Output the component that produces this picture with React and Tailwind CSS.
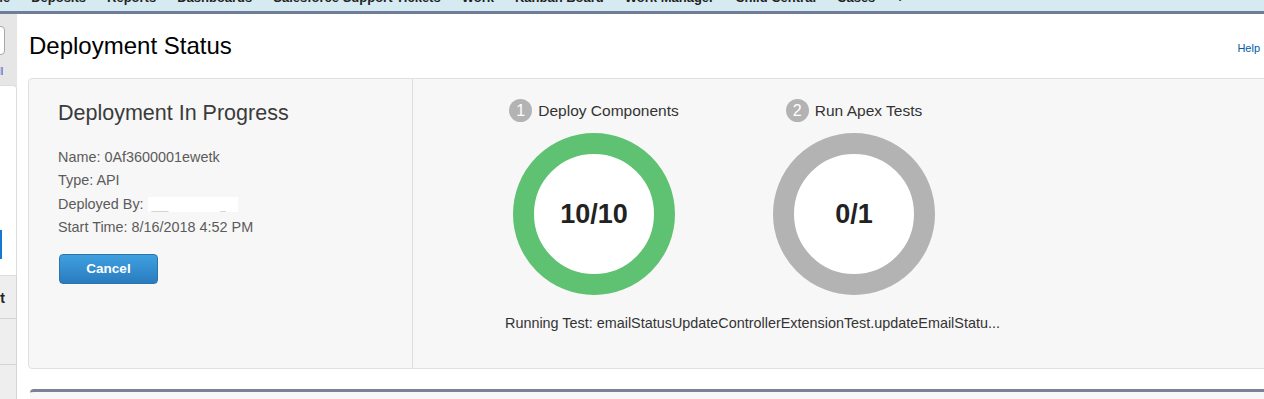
const navItems = ['Home', 'Deposits', 'Reports', 'Dashboards', 'Salesforce Support Tickets', 'Work', 'Kanban Board', 'Work Manager', 'Child Central', 'Cases', '+'];

function Step({ num, label, done, total, color }) {
  return (
    <div className="flex w-[162px] flex-col items-center">
      <div className="flex h-[23px] items-center gap-[6px] whitespace-nowrap">
        <span className="flex h-[23px] w-[23px] items-center justify-center rounded-full bg-[#b3b3b3] text-[16px] text-white">
          {num}
        </span>
        <span className="text-[15.5px] text-[#333]">{label}</span>
      </div>
      <div className={`mt-[11px] flex h-[162px] w-[162px] items-center justify-center rounded-full border-[21px] bg-white ${color}`}>
        <span className="text-[27px] font-bold text-[#222]">
          {done}/{total}
        </span>
      </div>
    </div>
  );
}

export default function App() {
  return (
    <div className="flex h-[399px] w-[1264px] flex-col overflow-hidden bg-white" style={{ fontFamily: '"Liberation Sans", Arial, sans-serif' }}>
      {/* Top tab bar, mostly scrolled off */}
      <div className="h-[14px] shrink-0 overflow-hidden border-b-[3px] border-[#6f7e96] bg-[#d6eaf2]">
        <div className="-ml-[26px] -mt-[9px] flex gap-[21px] whitespace-nowrap text-[13px] font-bold leading-[13px] text-[#222]">
          {navItems.map((item) => (
            <span key={item}>{item}</span>
          ))}
        </div>
      </div>

      <div className="flex min-h-0 flex-1">
        {/* Sidebar */}
        <div className="flex w-[17px] shrink-0 flex-col overflow-hidden bg-[#e6e6e6] pt-[12px]">
          <div className="-ml-[25px] h-[29px] w-[30px] shrink-0 rounded-[4px] border border-[#a9a9a9] bg-white" />
          <div className="-ml-[9px] mt-[10px] text-[11px] leading-[13px] text-[#4b3fc0]">All</div>
          <div className="mt-[7px] h-[191px] shrink-0 rounded-tr-[4px] border border-l-0 border-[#dcdcdc] bg-white">
            <div className="mt-[144px] h-[29px] w-[2px] bg-[#1976d2]" />
          </div>
          <div className="flex h-[43px] shrink-0 items-center justify-end overflow-hidden border-b border-r border-[#d4d4d4] bg-[#eeeeee] pr-[11px] pt-[2px]">
            <span className="whitespace-nowrap text-[14px] font-bold text-[#222]">Report</span>
          </div>
          <div className="h-[46px] shrink-0 border-b border-r border-[#d4d4d4] bg-[#eeeeee]" />
          <div className="flex-1 border-r border-[#d4d4d4] bg-[#eeeeee]" />
        </div>

        {/* Main */}
        <div className="flex min-w-0 flex-1 flex-col overflow-hidden pl-[12px]">
          <div className="flex items-start justify-between pr-[4px] pt-[18px]">
            <h1 className="text-[24px] leading-[28px] text-black">Deployment Status</h1>
            <a className="mt-[8px] text-[11px] text-[#015ba7]">Help</a>
          </div>

          <div className="-ml-[1px] -mr-[20px] mt-[18px] flex h-[291px] shrink-0 rounded-[4px] border border-[#e0e0e0] bg-[#f7f7f7]">
            <div className="w-[384px] shrink-0 border-r border-[#dddddd] pl-[29px] pt-[21px]">
              <h2 className="text-[21.5px] leading-[26px] text-[#3b3b3b]">Deployment In Progress</h2>
              <div className="mt-[20px] text-[14.4px] leading-[23.3px] text-[#5b5b5b]">
                <div>Name: 0Af3600001ewetk</div>
                <div>Type: API</div>
                <div className="flex items-center">
                  Deployed By:
                  <span className="ml-[4px] inline-flex h-[15px] w-[90px] items-end gap-[2px] bg-white pl-[4px] text-[10px] leading-[10px] text-[#c8c8c8]">
                    <span>___</span>
                    <span className="ml-[50px]">_</span>
                  </span>
                </div>
                <div>Start Time: 8/16/2018 4:52 PM</div>
              </div>
              <button className="ml-[1px] mt-[15px] h-[30px] w-[99px] rounded-[4px] border border-[#2b74ad] bg-gradient-to-b from-[#3fa0e0] to-[#2a7cbe] text-[13.5px] font-bold text-white">
                Cancel
              </button>
            </div>

            <div className="flex-1 pl-[92px] pt-[20px]">
              <div className="flex gap-[98px] pl-[8px]">
                <Step num="1" label="Deploy Components" done={10} total={10} color="border-[#5fc272]" />
                <Step num="2" label="Run Apex Tests" done={0} total={1} color="border-[#b3b3b3]" />
              </div>
              <p className="mt-[18px] text-[14.4px] leading-[20px] text-[#333]">
                Running Test: emailStatusUpdateControllerExtensionTest.updateEmailStatu...
              </p>
            </div>
          </div>

          <div className="-mr-[20px] ml-[1px] mt-[20px] flex-1 rounded-tl-[4px] border-t-[3px] border-[#7a8199] bg-[#f7f7f7]" />
        </div>
      </div>
    </div>
  );
}
